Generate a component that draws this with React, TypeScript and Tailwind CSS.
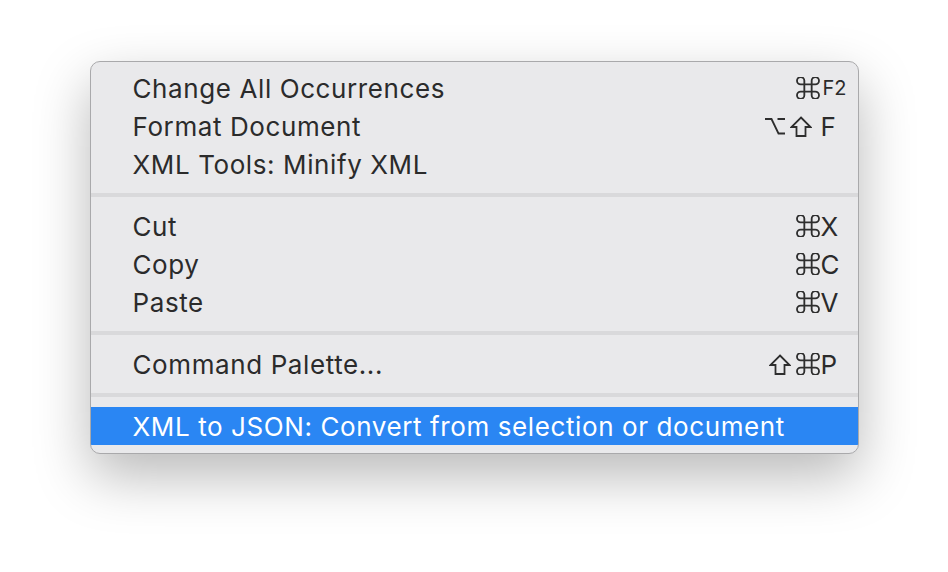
import React from 'react';

type Mod = 'cmd' | 'opt' | 'shift';

type Item = {
  label: string;
  mods?: Mod[];
  key?: string;
  small?: boolean;
  active?: boolean;
};

const groups: Item[][] = [
  [
    { label: 'Change All Occurrences', mods: ['cmd'], key: 'F2', small: true },
    { label: 'Format Document', mods: ['opt', 'shift'], key: 'F' },
    { label: 'XML Tools: Minify XML' },
  ],
  [
    { label: 'Cut', mods: ['cmd'], key: 'X' },
    { label: 'Copy', mods: ['cmd'], key: 'C' },
    { label: 'Paste', mods: ['cmd'], key: 'V' },
  ],
  [{ label: 'Command Palette...', mods: ['shift', 'cmd'], key: 'P' }],
  [{ label: 'XML to JSON: Convert from selection or document', active: true }],
];

// modifier key glyphs drawn as svg so they match the mac menu look
const ModIcon: React.FC<{ mod: Mod }> = ({ mod }) => {
  if (mod === 'cmd') {
    return (
      <svg width="24" height="22" viewBox="3 3 18 18" fill="none" stroke="currentColor" strokeWidth="1.5">
        <path d="M15 6v12a3 3 0 1 0 3-3H6a3 3 0 1 0 3 3V6a3 3 0 1 0-3 3h12a3 3 0 1 0-3-3" />
      </svg>
    );
  }
  if (mod === 'shift') {
    return (
      <svg width="22" height="21" viewBox="0 0 22 21" fill="none" stroke="currentColor" strokeWidth="1.8" strokeLinejoin="miter">
        <path d="M11 1.5 L20.5 11 H15.5 V20 H6.5 V11 H1.5 Z" />
      </svg>
    );
  }
  return (
    <svg width="20" height="18" viewBox="0 0 20 18" fill="none" stroke="currentColor" strokeWidth="1.8">
      <path d="M0 2h6.5l7 14.5H20" />
      <path d="M12.5 2H20" />
    </svg>
  );
};

const MenuRow: React.FC<{ item: Item }> = ({ item }) => {
  return (
    <div
      className={`flex h-[38px] items-center pl-[42px] pr-[12px] ${
        item.active ? 'bg-[#2a86f3] text-white' : 'text-[#2b2b2b]'
      }`}
    >
      <span className="flex-1 whitespace-nowrap">{item.label}</span>
      {item.key && (
        <span className="flex items-center">
          <span className={`flex items-center gap-[5px] text-[#2e2e2e] ${item.mods?.[0] === 'opt' ? 'mr-[8px]' : ''}`}>
            {item.mods?.map((m, i) => (
              <ModIcon key={i} mod={m} />
            ))}
          </span>
          <span className={`w-[26px] pl-[1px] tracking-normal ${item.small ? 'pl-[3px] text-[20px]' : ''}`}>{item.key}</span>
        </span>
      )}
    </div>
  );
};

const App: React.FC = () => {
  return (
    <div className="flex h-[572px] w-[948px] items-start justify-center bg-white pt-[61px] font-['Inter',sans-serif] text-[26px] tracking-[0.6px]">
      <div className="w-[769px] overflow-hidden rounded-[10px] border border-[#a9a9ab] bg-[#e9e9eb] pt-[7px] pb-[8px] shadow-[0_22px_55px_rgba(0,0,0,0.28)]">
        {groups.map((group, i) => (
          <div key={i}>
            {i > 0 && <div className="my-[10px] h-[4px] bg-[#d9d9db]" />}
            {group.map((item) => (
              <MenuRow key={item.label} item={item} />
            ))}
          </div>
        ))}
      </div>
    </div>
  );
};

export default App;
